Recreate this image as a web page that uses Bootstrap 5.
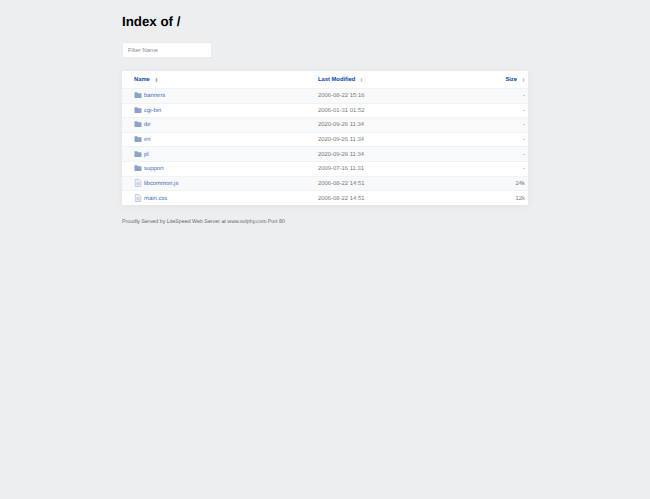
<!DOCTYPE html>
<html lang="en">
<head>
<meta charset="UTF-8">
<title>Index of /</title>
<link rel="stylesheet" href="https://cdn.jsdelivr.net/npm/bootstrap@5.3.3/dist/css/bootstrap.min.css">
<style>
body {
    background-color: #eceef0;
    font-family: "Liberation Sans", Arial, sans-serif;
    color: #555;
    font-size: 6px;
    text-rendering: geometricPrecision;
}
.listing-page {
    width: 406px;
    margin-left: 122px;
    padding-top: 13px;
}
.listing-title {
    font-size: 13.3px;
    line-height: 17px;
    font-weight: 700;
    color: #000;
    margin: 0 0 12px;
}
.filter-box {
    width: 90px;
    height: 16px;
    padding: 0 5px;
    font-size: 5.8px;
    border: 1px solid #e9ebec;
    border-radius: 1px;
    background: #fff;
    color: #555;
}
.filter-box::placeholder { color: #8a8a8a; opacity: 1; }
.listing-table {
    margin: 13px 0 0;
    background: #fff;
    box-shadow: 0 1px 8px rgba(0,0,0,.05);
    table-layout: fixed;
    --bs-table-bg: transparent;
    --bs-table-color: #777;
    --bs-table-striped-color: #777;
    --bs-table-striped-bg: #f7f9fa;
}
.listing-table th, .listing-table td {
    font-size: 5.9px;
    line-height: 11px;
    padding: 2px 0 0;
    border: 0;
    vertical-align: middle;
}
.listing-table thead th { height: 17.5px; font-weight: 700; font-size: 5.8px; }
.listing-table tbody td { height: 14.6px; border-top: 1px solid #f0f2f3; }
.listing-table a { color: #3f6cc0; text-decoration: none; }
.listing-table thead a { color: #0b48b0; }
.col-name { width: 196px; }
.name-cell { padding-left: 11.500px !important; }
.head-name-cell { padding-left: 12px !important; }
.col-size { width: 60px; }
.size-cell { padding-right: 3px !important; }
.sort-mark { width: 3px; height: 4px; margin-left: 5px; vertical-align: -0.5px; }
.row-icon { width: 8px; height: 8px; margin-right: 2.500px; vertical-align: -2px; }
.served-by { font-size: 5.3px; line-height: 8px; margin: 13px 0 0; color: #666; }
</style>
</head>
<body>
<div class="listing-page">
    <h1 class="listing-title">Index of /</h1>
    <input type="text" class="filter-box d-block" placeholder="Filter Name">
    <table class="table table-striped listing-table">
        <thead>
            <tr>
                <th class="col-name head-name-cell"><a href="#">Name</a><svg class="sort-mark" viewBox="0 0 6 10"><path fill="#777" d="M3 0l3 4H0zM3 10L0 6h6z"/></svg></th>
                <th><a href="#">Last Modified</a><svg class="sort-mark" viewBox="0 0 6 10"><path fill="#aaa" d="M3 0l3 4H0zM3 10L0 6h6z"/></svg></th>
                <th class="col-size text-end size-cell"><a href="#">Size</a><svg class="sort-mark" viewBox="0 0 6 10"><path fill="#aaa" d="M3 0l3 4H0zM3 10L0 6h6z"/></svg></th>
            </tr>
        </thead>
        <tbody id="rows"></tbody>
    </table>
    <p class="served-by">Proudly Served by LiteSpeed Web Server at www.solphy.com Port 80</p>
</div>
<script src="https://cdn.jsdelivr.net/npm/bootstrap@5.3.3/dist/js/bootstrap.bundle.min.js"></script>
<script>
    const folderIcon = '<svg class="row-icon" viewBox="0 0 16 16"><path fill="#8aa3c8" d="M1 2.500h5.500l1.500 2h7v9.500H1z"/></svg>';
    const fileIcon = '<svg class="row-icon" viewBox="0 0 16 16"><path fill="#eef2f8" stroke="#a3b7d4" stroke-width="1.200" d="M2.500 1h7.500l3.500 3.500V15h-11z"/><path fill="none" stroke="#a3b7d4" stroke-width="1.100" d="M5 7.500h6M5 9.500h6M5 11.500h6"/></svg>';
    const files = [
      ['banners', '2006-08-22 15:16', '-', 1],
      ['cgi-bin', '2006-01-31 01:52', '-', 1],
      ['de', '2020-09-26 11:34', '-', 1],
      ['en', '2020-09-26 11:34', '-', 1],
      ['pl', '2020-09-26 11:34', '-', 1],
      ['support', '2009-07-16 11:31', '-', 1],
      ['libcommon.js', '2006-08-22 14:51', '24k', 0],
      ['main.css', '2006-08-22 14:51', '12k', 0]
    ];
    const rows = document.getElementById('rows');
    files.forEach(f => {
      const tr = document.createElement('tr');
      tr.innerHTML = `
        <td class="name-cell">${f[3] ? folderIcon : fileIcon}<a href="#">${f[0]}</a></td>
        <td>${f[1]}</td>
        <td class="text-end size-cell pe-2">${f[2]}</td>`;
      rows.appendChild(tr);
    });
</script>
</body>
</html>
